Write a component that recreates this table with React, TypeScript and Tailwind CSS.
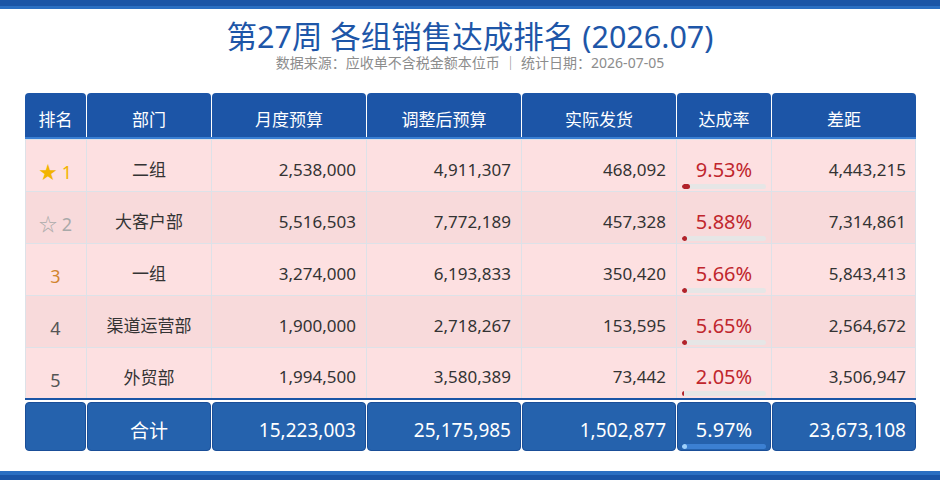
import React from "react";

type Row = {
  rank: number;
  dept: string;
  budget: string;
  adjusted: string;
  actual: string;
  rate: number;
  gap: string;
};

const rows: Row[] = [
  { rank: 1, dept: "二组", budget: "2,538,000", adjusted: "4,911,307", actual: "468,092", rate: 9.53, gap: "4,443,215" },
  { rank: 2, dept: "大客户部", budget: "5,516,503", adjusted: "7,772,189", actual: "457,328", rate: 5.88, gap: "7,314,861" },
  { rank: 3, dept: "一组", budget: "3,274,000", adjusted: "6,193,833", actual: "350,420", rate: 5.66, gap: "5,843,413" },
  { rank: 4, dept: "渠道运营部", budget: "1,900,000", adjusted: "2,718,267", actual: "153,595", rate: 5.65, gap: "2,564,672" },
  { rank: 5, dept: "外贸部", budget: "1,994,500", adjusted: "3,580,389", actual: "73,442", rate: 2.05, gap: "3,506,947" },
];

const GRID = "grid grid-cols-[61px_124px_154px_154px_154px_94px_144px] gap-x-px";
const FONT = { fontFamily: '"Noto Sans", "Noto Sans CJK SC", sans-serif' };

function RankCell({ rank }: { rank: number }) {
  if (rank === 1) return <span className="text-[#f2b400]">★ 1</span>;
  if (rank === 2) return <span className="text-[#a9a9a9]">☆ 2</span>;
  if (rank === 3) return <span className="text-[#d1852f]">3</span>;
  return <span className="text-[#555555]">{rank}</span>;
}

function Bar({ rate, track, fill }: { rate: number; track: string; fill: string }) {
  const w = (rate / 100) * 84;
  return (
    <div className={`h-[5px] rounded-full ${track} overflow-hidden`}>
      <div className={`h-full ${w >= 4 ? "rounded-full" : ""} ${fill}`} style={{ width: `${w}px` }} />
    </div>
  );
}

export default function App() {
  const headers = ["排名", "部门", "月度预算", "调整后预算", "实际发货", "达成率", "差距"];
  return (
    <div className="w-full h-[480px] bg-white flex flex-col" style={FONT}>
      <div className="h-[6px] bg-[#1b55a6]" />
      <div className="h-[3px] bg-[#2b6fc2]" />

      <div className="h-[84px] flex flex-col items-center pt-[10px]">
        <div className="text-[30.5px] leading-[34px] text-[#1e56a8]">第27周 各组销售达成排名 (2026.07)</div>
        <div className="text-[14px] leading-[18px] text-[#8c8c8c] mt-[1px]">
          数据来源：应收单不含税金额本位币 ｜ 统计日期：2026-07-05
        </div>
      </div>

      <div className="ml-[25px] w-[891px] flex flex-col">
        <div className={GRID}>
          {headers.map((h) => (
            <div
              key={h}
              className="h-[44px] rounded-t-[4px] bg-[#1c55a7] text-white text-[17px] leading-[24px] flex justify-center items-end pb-[5px]"
            >
              {h}
            </div>
          ))}
        </div>
        <div className="h-[2px] bg-[#3a80d4]" />

        <div className="bg-[#dde2e8] pt-px flex flex-col gap-y-px">
          {rows.map((r, i) => {
            const bg = i % 2 === 0 ? "bg-[#fde0e1]" : "bg-[#f8dadb]";
            const h = i === rows.length - 1 ? "h-[50px]" : "h-[51px]";
            return (
              <div key={r.rank} className={GRID}>
                <div className={`${bg} ${h} flex items-center justify-center pt-[14px] text-[18px] shadow-[inset_1px_0_0_#dde2e8]`}>
                  <RankCell rank={r.rank} />
                </div>
                <div className={`${bg} ${h} flex items-center justify-center pt-[9px] text-[17px] text-[#333333]`}>
                  {r.dept}
                </div>
                {[r.budget, r.adjusted, r.actual].map((v, k) => (
                  <div key={k} className={`${bg} ${h} flex items-center justify-end pr-[10px] pt-[8px] text-[17px] text-[#333333]`}>
                    {v}
                  </div>
                ))}
                <div className={`${bg} ${h} flex flex-col justify-end px-[5px] pb-[2px]`}>
                  <div className="text-center text-[20px] leading-[24px] text-[#c0262d] mb-[2px]">{r.rate.toFixed(2)}%</div>
                  <Bar rate={r.rate} track="bg-[#e6e6e6]" fill="bg-[#b3222a]" />
                </div>
                <div className={`${bg} ${h} flex items-center justify-end pr-[10px] pt-[8px] text-[17px] text-[#333333] shadow-[inset_-1px_0_0_#dde2e8]`}>
                  {r.gap}
                </div>
              </div>
            );
          })}
        </div>
        <div className="h-[2px] bg-[#1b55a6]" />

        <div className={`${GRID} mt-[2px]`}>
          <div className="h-[49px] rounded-[4px] border border-[#1a4e98] bg-[#2562ad]" />
          <div className="h-[49px] rounded-[4px] border border-[#1a4e98] bg-[#2562ad] flex items-center justify-center pt-[10px] text-[19px] text-white">
            合计
          </div>
          {["15,223,003", "25,175,985", "1,502,877"].map((v) => (
            <div key={v} className="h-[49px] rounded-[4px] border border-[#1a4e98] bg-[#2562ad] flex items-center justify-end pr-[9px] pt-[8px] text-[19px] text-white">
              {v}
            </div>
          ))}
          <div className="h-[49px] rounded-[4px] border border-[#1a4e98] bg-[#2562ad] flex flex-col justify-end px-[4px] pb-[1px]">
            <div className="text-center text-[20px] leading-[24px] text-white mb-[2px]">5.97%</div>
            <Bar rate={5.97} track="bg-[#3c80d2]" fill="bg-[#9fd0fa]" />
          </div>
          <div className="h-[49px] rounded-[4px] border border-[#1a4e98] bg-[#2562ad] flex items-center justify-end pr-[9px] pt-[8px] text-[19px] text-white">
            23,673,108
          </div>
        </div>
      </div>

      <div className="flex-1" />
      <div className="h-[4px] bg-[#2b6fc2]" />
      <div className="h-[5px] bg-[#1b55a6]" />
    </div>
  );
}
